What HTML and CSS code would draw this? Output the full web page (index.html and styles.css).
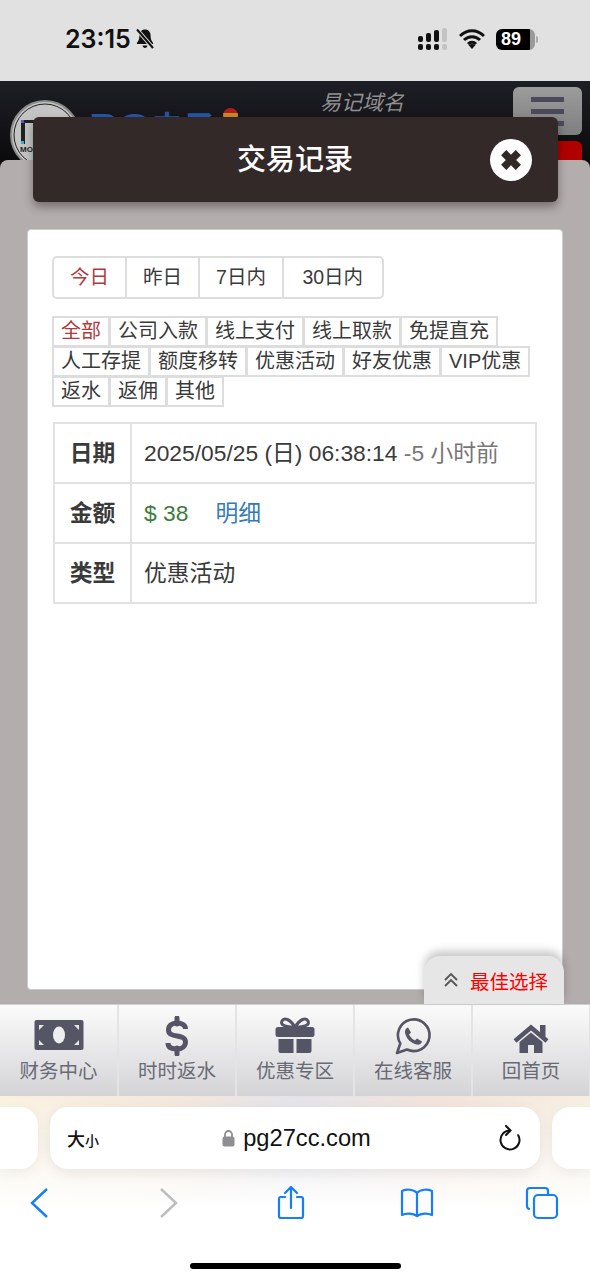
FILE: index.html
```html
<!DOCTYPE html>
<html lang="zh-CN">
<head>
    <meta charset="UTF-8">
    <meta name="viewport" content="width=device-width, initial-scale=1.0">
    <title>交易记录</title>
    <link rel="stylesheet" href="styles.css">
</head>
<body>
    <div class="status-bar">
        <div class="status-left">
            <span class="clock">23:15</span>
            <svg class="bell" viewBox="0 0 20 22" width="20" height="22">
                <path d="M10 1.5c-3.6 0-5.6 2.7-5.6 6 0 3.6-.8 5.400-2.400 7.200-.4.500-.1 1.300.6 1.300h14.800c.7 0 1-.8.6-1.300-1.600-1.800-2.400-3.600-2.400-7.200 0-3.300-2-6-5.600-6z" fill="#111"/>
                <path d="M7.500 17.500c.3 1.500 1.200 2.500 2.500 2.500s2.200-1 2.500-2.500z" fill="#111"/>
                <path d="M2 1.500l16 18.500" stroke="#e1e1e1" stroke-width="4"/>
                <path d="M2 1.500l16 18.500" stroke="#111" stroke-width="2"/>
            </svg>
        </div>
        <div class="status-right">
            <svg viewBox="0 0 30 22" width="30" height="22">
                <rect x="0" y="8" width="5" height="6" rx="2" fill="#111"/>
                <rect x="0" y="16" width="5" height="6" rx="2" fill="#111"/>
                <rect x="8" y="5" width="5" height="9" rx="2" fill="#111"/>
                <rect x="8" y="16" width="5" height="6" rx="2" fill="#111"/>
                <rect x="16" y="2" width="5" height="12" rx="2" fill="#111"/>
                <rect x="16" y="16" width="5" height="6" rx="2" fill="#111"/>
                <rect x="24" y="0" width="5" height="14" rx="2" fill="#c4c4c4"/>
                <rect x="24" y="16" width="5" height="6" rx="2" fill="#c4c4c4"/>
            </svg>
            <svg viewBox="0 0 26 20" width="26" height="20">
                <path d="M1 7c7-7 17-7 24 0M5 11c4.500-4.500 11.500-4.500 16 0M9 15c2.300-2.200 5.700-2.200 8 0" fill="none" stroke="#111" stroke-width="3"/>
                <path d="M13 20l-3.500-4c2-1.500 5-1.500 7 0z" fill="#111"/>
            </svg>
            <span class="battery">89</span>
            <span class="battery-nub"></span>
        </div>
    </div>

    <div class="app">
        <header class="site-header">
            <div class="logo">
                <svg viewBox="0 0 70 70" width="70" height="70">
                    <circle cx="35" cy="35" r="34" fill="#c4c4c4" stroke="#8a8a8a" stroke-width="2"/>
                    <circle cx="35" cy="35" r="31" fill="none" stroke="#222" stroke-width="1"/>
                    <path d="M11 20h4v24h-4zM15 20h10v3H15z" fill="#222"/>
                    <rect x="11" y="20" width="3" height="3" fill="#6a4fc0"/>
                    <rect x="11" y="41" width="3" height="3" fill="#2fb6c8"/>
                    <text x="10" y="52" class="logo-text">MOK</text>
                </svg>
            </div>
            <div class="brand"><span class="brand-latin">PG</span>电子<span class="brand-badge"></span></div>
            <div class="domain">易记域名</div>
            <div class="header-actions">
                <div class="menu-button"><i></i><i></i><i></i></div>
                <div class="red-button"></div>
            </div>
        </header>

        <main class="sheet">
            <div class="modal-title">
                <h1>交易记录</h1>
                <div class="modal-close">
                    <svg viewBox="0 0 24 24" width="32" height="32">
                        <path d="M6.500 6.500l11 11M17.500 6.500l-11 11" stroke="#332929" stroke-width="5.500"/>
                    </svg>
                </div>
            </div>

            <section class="panel">
                <div class="range-group">
                    <a class="active">今日</a>
                    <a>昨日</a>
                    <a>7日内</a>
                    <a>30日内</a>
                </div>

                <div class="type-group">
                    <a class="active">全部</a>
                    <a>公司入款</a>
                    <a>线上支付</a>
                    <a>线上取款</a>
                    <a>免提直充</a>
                    <a>人工存提</a>
                    <a>额度移转</a>
                    <a>优惠活动</a>
                    <a>好友优惠</a>
                    <a>VIP优惠</a>
                    <a>返水</a>
                    <a>返佣</a>
                    <a>其他</a>
                </div>

                <table class="record">
                    <tr>
                        <th>日期</th>
                        <td>2025/05/25 (日) 06:38:14 <span class="muted">-5 小时前</span></td>
                    </tr>
                    <tr>
                        <th>金额</th>
                        <td><span class="money">$ 38</span><a class="detail">明细</a></td>
                    </tr>
                    <tr>
                        <th>类型</th>
                        <td>优惠活动</td>
                    </tr>
                </table>
            </section>

            <div class="best-tab">
                <svg viewBox="0 0 16 16" width="16" height="16">
                    <path d="M2 8l6-6 6 6M2 14l6-6 6 6" fill="none" stroke="#555" stroke-width="1.800"/>
                </svg>
                <span>最佳选择</span>
            </div>
        </main>

        <nav class="tab-bar">
            <a class="tab">
                <svg viewBox="0 0 50 40" width="50" height="40">
                    <rect x="0.500" y="4" width="49" height="30" rx="2" fill="#565566"/>
                    <ellipse cx="25" cy="19" rx="6" ry="8.500" fill="#eee"/>
                    <path d="M5 9h5l-5 5zM45 9h-5l5 5zM5 29h5l-5-5zM45 29h-5l5-5z" fill="#e6e6e6"/>
                </svg>
                <span>财务中心</span>
            </a>
            <a class="tab">
                <svg viewBox="0 0 50 40" width="50" height="40">
                    <path d="M33.500 13C33.500 9 30 7 25 7 19.500 7 16.500 10 16.500 14 16.500 23 33.500 17 33.500 26 33.500 30 30 33 25 33 19.500 33 16 31 16 27" fill="none" stroke="#565566" stroke-width="5"/>
                    <path d="M25 2v6M25 32v6" stroke="#565566" stroke-width="5" stroke-linecap="round"/>
                </svg>
                <span>时时返水</span>
            </a>
            <a class="tab">
                <svg viewBox="0 0 50 40" width="50" height="40">
                    <path d="M25 11C20 3 14 1 12 5 10 9 15 11 25 11 35 11 40 9 38 5 36 1 30 3 25 11z" fill="none" stroke="#565566" stroke-width="3"/>
                    <rect x="5.500" y="11" width="39" height="10" rx="2.500" fill="#565566"/>
                    <path d="M8.500 23h15v14h-13a2 2 0 0 1-2-2zM26.500 23h15v12a2 2 0 0 1-2 2h-13z" fill="#565566"/>
                </svg>
                <span>优惠专区</span>
            </a>
            <a class="tab">
                <svg viewBox="0 0 50 40" width="50" height="40">
                    <path d="M9 37L12.300 27.500A15.800 15.800 0 1 1 19 33.500z" fill="none" stroke="#565566" stroke-width="2.600" stroke-linejoin="round"/>
                    <path d="M20 11.500l3 5-2 2c1.200 2.600 3.400 4.800 6 6l2-2 5 3c-.6 2.600-3 3.500-5 3-6-1-11-6-12-12-.3-2 .8-4.500 3-5z" fill="#565566"/>
                </svg>
                <span>在线客服</span>
            </a>
            <a class="tab">
                <svg viewBox="0 0 50 40" width="50" height="40">
                    <path d="M9 25L25 11.500 41 25" fill="none" stroke="#565566" stroke-width="4.500"/>
                    <path d="M34 9h5.500v12H34zM13.500 26L25 16.500 36.500 26v11H28v-8h-6v8h-8.500z" fill="#565566"/>
                </svg>
                <span>回首页</span>
            </a>
        </nav>
    </div>

    <div class="browser-bar">
        <div class="address-row">
            <div class="side-pill side-left"></div>
            <div class="address">
                <span class="text-size">大<small>小</small></span>
                <span class="url">
                    <svg viewBox="0 0 13 17" width="13" height="17">
                        <path d="M3 7V4.500a3.500 3.500 0 0 1 7 0V7" fill="none" stroke="#8e8e93" stroke-width="1.800"/>
                        <rect x="0.500" y="6.500" width="12" height="10" rx="2" fill="#8e8e93"/>
                    </svg>
                    pg27cc.com
                </span>
                <svg class="reload" viewBox="0 0 24 26" width="24" height="26">
                    <path d="M20.200 10.200A9.500 9.500 0 1 1 12 5.500" fill="none" stroke="#111" stroke-width="2" stroke-linecap="round"/>
                    <path d="M8 1l4.500 4.500L8 10" fill="none" stroke="#111" stroke-width="2" stroke-linecap="round"/>
                </svg>
            </div>
            <div class="side-pill side-right"></div>
        </div>

        <div class="toolbar">
            <svg viewBox="0 0 34 34" width="34" height="34">
                <path d="M24 3L9 17l15 14" fill="none" stroke="#147efb" stroke-width="2.400"/>
            </svg>
            <svg viewBox="0 0 34 34" width="34" height="34">
                <path d="M12 3l15 14-15 14" fill="none" stroke="#bdbdbd" stroke-width="2.400"/>
            </svg>
            <svg viewBox="0 0 34 34" width="34" height="34">
                <path d="M11 11H7a2 2 0 0 0-2 2v17a2 2 0 0 0 2 2h20a2 2 0 0 0 2-2V13a2 2 0 0 0-2-2h-4M17 22V2M11 7l6-6 6 6" fill="none" stroke="#147efb" stroke-width="2.200" stroke-linecap="round"/>
            </svg>
            <svg viewBox="0 0 34 34" width="34" height="34">
                <path d="M17 7C14 3 6 3 2 5v24c4-2 11-2 15 1 4-3 11-3 15-1V5c-4-2-12-2-15 2zM17 7v23" fill="none" stroke="#147efb" stroke-width="2.200" stroke-linejoin="round"/>
            </svg>
            <svg viewBox="0 0 34 34" width="34" height="34">
                <path d="M5 23a3 3 0 0 1-3-3V5a3 3 0 0 1 3-3h15a3 3 0 0 1 3 3v3" fill="none" stroke="#147efb" stroke-width="2.200"/>
                <rect x="9" y="9" width="23" height="23" rx="4" fill="none" stroke="#147efb" stroke-width="2.200"/>
            </svg>
        </div>

        <div class="home-indicator"></div>
    </div>
</body>
</html>
```

FILE: styles.css
```css
*{
    margin: 0px;
    padding: 0px;
    box-sizing: border-box;
}

body{
    width: 590px;
    height: 1280px;
    overflow: hidden;
    background-color: #FFF;
    color: #3A3A3A;
    font-family: "Liberation Sans", "Noto Sans CJK SC", sans-serif;
}

/* phone status bar */
.status-bar{
    height: 81px;
    padding: 0px 52px 3px 65px;
    background-color: #E1E1E1;
    display: flex;
    justify-content: space-between;
    align-items: center;
}

.status-left{
    display: flex;
    align-items: center;
    gap: 4px;
}

.clock{
    font-family: Inter, "Liberation Sans", sans-serif;
    font-size: 25px;
    font-weight: 600;
    color: #111;
}

.status-right{
    display: flex;
    align-items: center;
    gap: 11px;
}

.battery{
    width: 39px;
    height: 21px;
    border-radius: 6px;
    background: linear-gradient(90deg, #000 86%, #999 86%);
    color: #FFF;
    font-size: 18px;
    font-weight: 700;
    line-height: 21px;
    padding-left: 5px;
}

.battery-nub{
    width: 2px;
    height: 7px;
    margin-left: -10px;
    border-radius: 0px 2px 2px 0px;
    background-color: #AAA;
}

/* site behind the modal */
.app{
    height: 1015px;
    background-color: #0D0D0F;
    display: flex;
    flex-direction: column;
}

.site-header{
    height: 79px;
    overflow: hidden;
    background: linear-gradient(#1E1E26, #0B0B0D);
    display: flex;
    align-items: flex-start;
    padding: 6px 8px 0px 10px;
}

.logo{
    margin-top: 13px;
    width: 70px;
    height: 70px;
}

.logo-text{
    font-size: 8px;
    font-weight: 700;
    fill: #222;
}

.brand{
    margin: 21px 0px 0px 9px;
    width: 153px;
    font-size: 32px;
    font-weight: 700;
    line-height: 40px;
    color: #2456A8;
    white-space: nowrap;
    display: flex;
}

.brand-latin{
    font-size: 43px;
}

.brand-badge{
    width: 15px;
    height: 15px;
    margin: 0px 0px 0px 8px;
    border-radius: 50%;
    background: linear-gradient(#B01C1C 35%, #C98A20 35%);
}

.domain{
    margin: 1px 0px 0px 78px;
    font-size: 21px;
    font-style: italic;
    line-height: 30px;
    color: #8F8F8F;
    width: 100px;
}

.header-actions{
    flex: 1;
    display: flex;
    flex-direction: column;
    align-items: flex-end;
    gap: 6px;
}

.menu-button{
    width: 69px;
    height: 48px;
    border-radius: 6px;
    background: linear-gradient(#9C9C9C, #7E7E7E);
    display: flex;
    flex-direction: column;
    justify-content: center;
    align-items: center;
    gap: 7px;
}

.menu-button i{
    width: 33px;
    height: 5px;
    background-color: #4A4A5A;
}

.red-button{
    width: 60px;
    height: 34px;
    border-radius: 6px 6px 0px 0px;
    background-color: #B00000;
}

.sheet{
    position: relative;
    height: 844px;
    padding: 69px 27px 14px;
    background-color: #B4ADAD;
    border-radius: 8px 8px 0px 0px;
}

.modal-title{
    position: absolute;
    top: -43px;
    left: 33px;
    width: 525px;
    height: 85px;
    background-color: #332929;
    border-radius: 6px;
    box-shadow: 0px 5px 10px rgba(0,0,0,0.35);
    display: flex;
    align-items: center;
}

.modal-title h1{
    flex: 1;
    padding: 0px 0px 5px 204px;
    font-size: 29px;
    font-weight: 500;
    color: #FFF;
}

.modal-close{
    width: 42px;
    height: 42px;
    margin-right: 26px;
    border-radius: 50%;
    background-color: #FFF;
    display: flex;
    justify-content: center;
    align-items: center;
}

.panel{
    height: 761px;
    padding: 26px 26px 0px 25px;
    background-color: #FFF;
    border: 1px solid #CCC;
    border-radius: 4px;
}

.range-group{
    display: inline-flex;
    margin-left: -1px;
    height: 43px;
    border: 2px solid #DDD;
    border-radius: 5px;
    font-size: 19.500px;
    vertical-align: top;
}

.range-group a{
    padding: 0px 16px;
    line-height: 38px;
    border-left: 2px solid #DDD;
}

.range-group a:first-child{
    border-left: 0px;
}

.range-group a:last-child{
    padding: 0px 18.500px;
}

.active{
    color: #B13A3A;
}

.type-group{
    margin: 17px 0px 16px -1px;
    display: flex;
    flex-wrap: wrap;
    font-size: 20px;
}

.type-group a{
    height: 31px;
    margin: 0px -1px -1px 0px;
    padding: 0px 7px;
    line-height: 27px;
    border: 2px solid #DDD;
}

.record{
    width: 484px;
    border-collapse: collapse;
    font-size: 22.800px;
    table-layout: fixed;
}

.record th, .record td{
    height: 60px;
    padding-bottom: 4px;
    border: 2px solid #E2E2E2;
}

.record th{
    width: 77px;
    font-weight: 700;
}

.record td{
    padding-left: 12px;
    white-space: nowrap;
}

.muted{
    color: #777;
}

.money{
    color: #3C7C3C;
}

.detail{
    margin-left: 27px;
    color: #337AB7;
}

.best-tab{
    position: absolute;
    right: 26px;
    bottom: 0px;
    width: 140px;
    height: 48px;
    padding-left: 19px;
    background-color: #E6E6E6;
    border-radius: 16px 16px 0px 0px;
    box-shadow: 0px -5px 8px rgba(0,0,0,0.22);
    display: flex;
    align-items: center;
    gap: 11px;
    font-size: 19.500px;
    color: #F00;
}

/* bottom nav of the site */
.tab-bar{
    height: 92px;
    display: flex;
    background: linear-gradient(#FBFBFB, #D4D4D7);
    border-top: 1px solid #CFCFCF;
}

.tab{
    width: 118px;
    padding-top: 11px;
    border-left: 1px solid #E4E4E6;
    border-right: 1px solid #E4E4E6;
    display: flex;
    flex-direction: column;
    align-items: center;
    font-size: 19.500px;
    line-height: 30px;
    color: #686A75;
}

.tab:first-child{
    border-left: 0px;
}

/* safari bottom bar */
.browser-bar{
    height: 184px;
    background: linear-gradient(rgba(255,255,255,0), #FFF 62%), linear-gradient(90deg, #F9F2E0, #F4E7DB 30%, #E3E3EA 50%, #F3E3DA 75%, #F6EFE0);
    position: relative;
}

.address-row{
    padding-top: 11px;
    display: flex;
    justify-content: space-between;
}

.side-pill{
    width: 38px;
    height: 62px;
    background-color: #FFF;
    box-shadow: 0px 4px 14px rgba(0,0,0,0.06);
}

.side-left{
    border-radius: 0px 18px 18px 0px;
}

.side-right{
    border-radius: 18px 0px 0px 18px;
}

.address{
    width: 490px;
    height: 62px;
    padding: 0px 18px 0px 17px;
    background-color: #FFF;
    border-radius: 18px;
    box-shadow: 0px 4px 14px rgba(0,0,0,0.08);
    display: flex;
    justify-content: space-between;
    align-items: center;
    color: #111;
}

.text-size{
    font-size: 18px;
    font-weight: 500;
}

.text-size small{
    font-size: 14px;
}

.url{
    margin-right: 4px;
    font-size: 23.700px;
    display: flex;
    align-items: center;
    gap: 8px;
}

.toolbar{
    margin-top: 17px;
    padding: 0px 31px 0px 23px;
    display: flex;
    justify-content: space-between;
}

.home-indicator{
    position: absolute;
    left: 190px;
    bottom: 11px;
    width: 211px;
    height: 6px;
    border-radius: 3px;
    background-color: #000;
}
```
